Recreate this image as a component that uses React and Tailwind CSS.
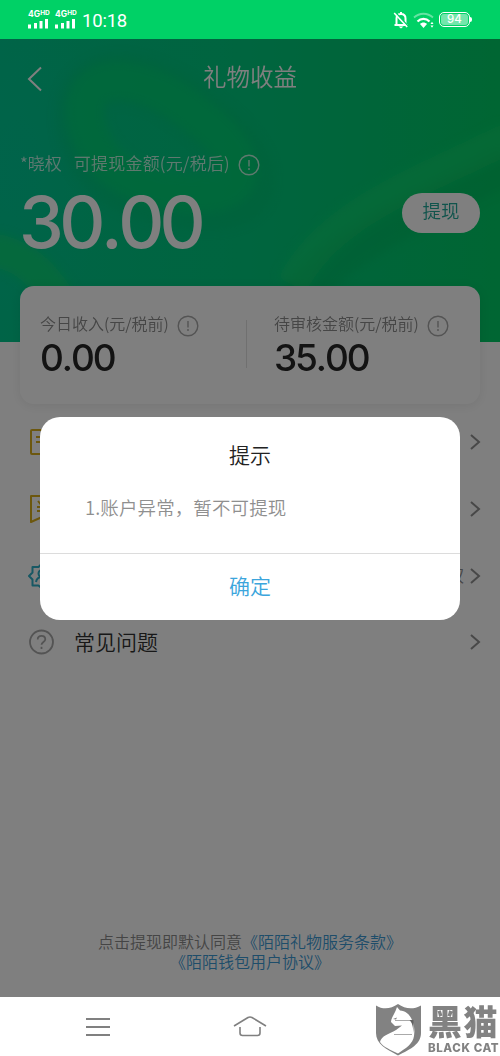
import React from 'react';

const menuItems = [
  { id: 'bill', icon: BillIcon },
  { id: 'record', icon: RecordIcon },
  { id: 'auth', icon: BadgeIcon, value: '权' },
  { id: 'faq', label: '常见问题', icon: HelpIcon },
];

function BillIcon() {
  return (
    <svg className="w-[26px] h-[28px] ml-px" viewBox="0 0 26 28" fill="none" stroke="#d9ae1c" strokeWidth="2">
      <rect x="2" y="2" width="22" height="24" rx="1" />
      <path d="M7 9h12M7 14h12" />
    </svg>
  );
}

function RecordIcon() {
  return (
    <svg className="w-[26px] h-[28px] ml-px" viewBox="0 0 26 28" fill="none" stroke="#d9ae1c" strokeWidth="2" strokeLinejoin="round">
      <path d="M2 1h22v26l-11-5-11 5z" />
      <path d="M8 12h10M8 16h10M13 11v8M9 6l4 5 4-5" />
    </svg>
  );
}

function BadgeIcon() {
  return (
    <svg className="w-[28px] h-[28px]" viewBox="0 0 28 28" fill="none" stroke="#2fb0c8" strokeWidth="2" strokeLinejoin="round">
      <path d="M14 1.500l3.500 3.500h5.500v5.500l3.500 3.500-3.500 3.500v6h-5.500l-3.500 3-3.500-3h-6v-6l-3.500-3.500 3.500-3.500v-5.500h6z" />
      <circle cx="14" cy="11.500" r="3.500" />
      <path d="M8 20c.5-3 3-5 6-5s5.500 2 6 5" />
    </svg>
  );
}

function HelpIcon() {
  return (
    <svg className="w-[26px] h-[26px]" viewBox="0 0 26 26" fill="none" stroke="#a8a8a8" strokeWidth="1.800">
      <circle cx="13.500" cy="13" r="11.500" />
      <path d="M9.700 10.500c0-2.200 1.600-3.700 3.800-3.700s3.800 1.400 3.800 3.400c0 2.600-3.800 2.900-3.800 5.600" />
      <path d="M13.500 17.800v2.200" />
    </svg>
  );
}

function InfoIcon({ className }) {
  return (
    <svg className={className} viewBox="0 0 22 22" fill="none" stroke="currentColor" strokeWidth="1.400">
      <circle cx="11" cy="11" r="9.800" />
      <path d="M11 6v6.500M11 14v2" />
    </svg>
  );
}

function Signal() {
  return (
    <div className="w-[21px] flex flex-col text-white">
      <span className="flex items-start text-[8.500px] leading-[8px] font-bold">
        4G<span className="text-[6.500px] leading-[6px]">HD</span>
      </span>
      <svg className="w-[21px] h-[10px] mt-px" viewBox="0 0 21 10" fill="currentColor">
        <path d="M0 5.500h3V9.500H0zM6 4h3v5.500H6zM11.500 2h3v7.500h-3zM17 0h3v9.500h-3z" />
      </svg>
    </div>
  );
}

function StatusBar() {
  return (
    <div className="h-[39px] shrink-0 bg-[#00d166] flex items-center justify-between pl-[28px] pr-[28px] text-white font-[Inter,sans-serif]">
      <div className="flex items-center">
        <div className="flex gap-[6px] -mt-[1px]">
          <Signal />
          <Signal />
        </div>
        <span className="ml-[6px] pt-[3px] text-[18.500px] leading-none tracking-[-0.2px] font-[Roboto,sans-serif]">10:18</span>
      </div>
      <div className="flex items-center">
        <svg className="w-[16px] h-[18px]" viewBox="0 0 16 18" fill="none" stroke="currentColor" strokeWidth="2">
          <path d="M3.500 13V7.500C3.500 4.500 5.500 3 8 3s4.500 1.500 4.500 4.500V13M1.500 14h13M8 1v2" />
          <path d="M5.500 15.500h5L8 17.500z" fill="currentColor" stroke="none" />
          <path d="M2.500 1.500l13 14" stroke="#00d166" strokeWidth="1.500" />
          <path d="M1.200 2l13 14" strokeWidth="1.600" />
        </svg>
        <svg className="w-[22px] h-[18px] ml-[4px]" viewBox="0 0 22 18" fill="none" stroke="currentColor">
          <path d="M1 6.500c5.500-5 13.500-5 19 0" strokeWidth="1.800" opacity="0.4" />
          <path d="M4.500 10.500c3.500-3.600 8.500-3.600 12 0" strokeWidth="2.200" />
          <path d="M7 13c2-2 5-2 7 0l-3.500 4z" fill="currentColor" stroke="none" />
          <path d="M17.500 13l1.500-2.200 1.500 2.200zM17.500 14.500l1.500 2.200 1.500-2.200z" fill="currentColor" stroke="none" />
        </svg>
        <div className="ml-[4px] flex items-center">
          <div className="w-[31px] h-[15px] rounded-[5px] border-[1.500px] border-white p-px">
            <div className="h-full rounded-[3px] bg-white/45 flex items-center justify-center text-[11.500px] leading-none font-medium">94</div>
          </div>
          <div className="w-[2px] h-[5px] rounded-r bg-white" />
        </div>
      </div>
    </div>
  );
}

function Ribbons() {
  return (
    <svg className="absolute inset-0 w-full h-full" viewBox="0 0 500 303" preserveAspectRatio="none" fill="none">
      <defs>
        <filter id="soft" x="-20%" y="-20%" width="140%" height="140%">
          <feGaussianBlur stdDeviation="5" />
        </filter>
        <radialGradient id="teal">
          <stop offset="0" stopColor="#00c69c" />
          <stop offset="1" stopColor="#00c69c" stopOpacity="0" />
        </radialGradient>
      </defs>
      <ellipse cx="15" cy="130" rx="90" ry="170" fill="url(#teal)" opacity="0.5" />
      <g filter="url(#soft)">
        <path d="M82 90C70 20 150 30 205 80C260 120 270 172 200 166C135 162 92 140 82 90z" stroke="#00bc68" strokeWidth="50" opacity="0.25" />
        <path d="M86 82C76 26 145 32 196 76C248 112 256 158 195 154C135 150 96 130 86 82z" stroke="#0cdc74" strokeWidth="38" opacity="0.5" />
        <path d="M510 124C440 162 340 200 298 262" stroke="#00b058" strokeWidth="40" opacity="0.28" />
        <path d="M510 98C430 140 330 170 292 246" stroke="#10dc70" strokeWidth="32" opacity="0.45" />
        <path d="M-10 210C20 215 40 230 60 262" stroke="#0cd86c" strokeWidth="34" opacity="0.6" />
      </g>
    </svg>
  );
}

function Stat({ label, amount }) {
  return (
    <div className="w-[234px] shrink-0">
      <div className="flex items-start h-[25px]">
        <span className="text-[16px] leading-[22px] text-[#8c8c8c] whitespace-nowrap">{label}</span>
        <InfoIcon className="w-[22px] h-[22px] ml-[8px] mt-[3px] text-[#a8a8a8]" />
      </div>
      <p className="font-[Inter,sans-serif] font-medium text-[37px] leading-[42px] tracking-[-2.200px] text-[#262626]">
        <Amount value={amount} />
      </p>
    </div>
  );
}

// the decimal point is not kerned into the digits
function Amount({ value }) {
  const [whole, cents] = value.split('.');
  return (
    <>
      {whole}
      <span className="mx-[0.004em]">.</span>
      {cents}
    </>
  );
}

function WalletPage() {
  return (
    <div className="h-full flex flex-col bg-white font-[350]">
      <div className="relative h-[303px] shrink-0 bg-linear-to-r from-[#00c98e] via-[#00ca7e] to-[#00cc66]">
        <Ribbons />
        <div className="relative text-white">
          <div className="h-[76px] grid grid-cols-[1fr_auto_1fr] items-center">
            <svg className="w-[16px] h-[26px] ml-[27px] mt-[3px]" viewBox="0 0 16 26" fill="none" stroke="currentColor" strokeWidth="2">
              <path d="M14 1.500L2 13l12 11.500" />
            </svg>
            <h1 className="text-[23.500px] leading-none">礼物收益</h1>
          </div>
          <div className="flex items-center pl-[20px] h-[26px] mt-[35px] text-white/75">
            <span className="text-[17px] leading-[26px]">*晓权</span>
            <span className="text-[17px] tracking-[0.200px] leading-[26px] ml-[12px]">可提现金额(元/税后)</span>
            <InfoIcon className="w-[22px] h-[22px] ml-[8px] mt-[3px]" />
          </div>
          <div className="flex justify-between pl-[19px] pr-[20px] mt-[4px]">
            <span className="font-[Inter,sans-serif] font-medium text-[71.500px] leading-[84px] tracking-[-4.700px]">
              <Amount value="30.00" />
            </span>
            <button className="mt-[13px] w-[78px] h-[40px] pb-[5px] rounded-full bg-white text-[#20a898] text-[18.500px] leading-none">提现</button>
          </div>
        </div>
      </div>

      <div className="relative mx-[20px] -mt-[56px] h-[118px] shrink-0 rounded-[14px] bg-white shadow-[0_2px_12px_rgba(0,0,0,0.08)] flex pl-[20px] pt-[26px]">
        <Stat label="今日收入(元/税前)" amount="0.00" />
        <div className="absolute left-[226px] top-[34px] w-px h-[48px] bg-[#e0e0e0]" />
        <Stat label="待审核金额(元/税前)" amount="35.00" />
      </div>

      <ul className="mt-[5px]">
        {menuItems.map(({ id, label, icon: Icon, value }) => (
          <li key={id} className="h-[66.700px] flex items-center pl-[28px] pr-[19px]">
            <div className="w-[46px] flex">
              <Icon />
            </div>
            <span className="text-[21px] text-[#303030] -mt-[2px]">{label}</span>
            <span className="ml-auto text-[17px] text-[#8c8c8c] -mt-[2px]">{value}</span>
            <svg className="w-[12px] h-[18px] ml-[5px]" viewBox="0 0 12 18" fill="none" stroke="#909090" strokeWidth="2">
              <path d="M2 2l8 7-8 7" />
            </svg>
          </li>
        ))}
      </ul>

      <div className="mt-auto mb-[26px] text-center text-[16px] leading-[19.500px] text-[#8a8a8a]">
        <p>
          点击提现即默认同意<span className="text-[#3c9ad4]">《陌陌礼物服务条款》</span>
        </p>
        <p className="text-[#3c9ad4]">《陌陌钱包用户协议》</p>
      </div>
    </div>
  );
}

function AlertDialog() {
  return (
    <div className="absolute inset-0 bg-black/50">
      <div className="mx-[40px] mt-[378px] h-[203px] rounded-[20px] bg-white flex flex-col font-[350]">
        <div className="flex-1 border-b border-[#dcdcdc]">
          <h2 className="mt-[23px] text-center text-[21px] leading-[28px] text-[#222]">提示</h2>
          <p className="mt-[26px] ml-[45px] text-[18.500px] leading-[26px] tracking-[0.1px] text-[#8f8f8f]">1.账户异常，暂不可提现</p>
        </div>
        <button className="h-[66px] pb-[3px] text-[21px] leading-none text-[#3ba5dc]">确定</button>
      </div>
    </div>
  );
}

function NavBar() {
  return (
    <div className="relative h-[59px] shrink-0 bg-white flex">
      <svg className="w-[24px] h-[20px] ml-[86px] mt-[20px]" viewBox="0 0 24 20" stroke="#808080" strokeWidth="1.800">
        <path d="M0 2h24M0 10h24M0 18h24" />
      </svg>
      <svg className="w-[34px] h-[22px] ml-[123px] mt-[18px]" viewBox="0 0 34 22" fill="none" stroke="#808080" strokeWidth="1.600">
        <path d="M1 11L15 2.500Q17 1.500 19 2.500L33 11M7 12v6q0 2.500 2.500 2.500h15q2.500 0 2.500-2.500v-6" />
      </svg>
      <div className="absolute left-[375px] top-[6px] w-[125px] h-[53px] flex text-[#828282]">
        <svg className="w-[47px] h-[53px] shrink-0" viewBox="0 0 47 53">
          <path d="M1 2.500C8 7 16 6 23 1c7 5 15 6 23 1.500V30c0 11-10 16-23 22.500C11 46 1 41 1 30z" fill="currentColor" />
          <path d="M20.500 8l1.500-4L25 7.500c5 0 10 4 12 9.500 2 5 3 10 2 16-1 8-8 12-16 17.500C16 47 8 44 5 39c1-6 9-8 16-12l6-4.500-7 .5-4-4c0-3 2-6 4.500-11z" fill="white" />
          <path d="M18 16l4-1.500-1 2z" fill="currentColor" />
          <path d="M20 17.500h17M19 31.500h18" stroke="#aaa" strokeWidth="1.200" />
          <path d="M34.500 17h4v13c-.5-6-1-10-4-13z" fill="#626262" />
        </svg>
        <div className="ml-[6px] shrink-0">
          <p className="text-[34px] leading-[36px] tracking-[1.500px] h-[37px] font-black whitespace-nowrap">黑猫</p>
          <p className="text-[11.500px] leading-[17px] font-extrabold font-[Inter,sans-serif] tracking-[0.600px] whitespace-nowrap">BLACK CAT</p>
        </div>
      </div>
    </div>
  );
}

const App = () => {
  return (
    <div className="w-[500px] h-[1056px] flex flex-col overflow-hidden bg-white font-['Noto_Sans_CJK_SC',sans-serif]">
      <StatusBar />
      <main className="relative h-[958px] shrink-0">
        <WalletPage />
        <AlertDialog />
      </main>
      <NavBar />
    </div>
  );
};

export default App;
